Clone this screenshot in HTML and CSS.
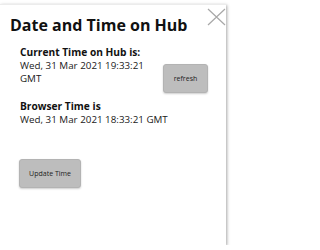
FILE: index.html
```html
<!DOCTYPE html>
<html>
<head>
<meta charset="utf-8">
<link rel="stylesheet" href="styles.css">
</head>
<body>
<div class="card">
  <div class="close" aria-label="close">
    <svg width="19" height="18" viewBox="0 0 19 18"><path d="M1 1L18 17M18 1L1 17" stroke="#a8a8a8" stroke-width="1.2" fill="none"/></svg>
  </div>
  <h1 class="title">Date and Time on Hub</h1>
  <div class="section">
    <div class="row">
      <div class="info">
        <div class="label">Current Time on Hub is:</div>
        <div class="value">Wed, 31 Mar 2021 19:33:21 GMT</div>
      </div>
      <button class="btn btn-refresh">refresh</button>
    </div>
    <div class="info browser">
      <div class="label">Browser Time is</div>
      <div class="value">Wed, 31 Mar 2021 18:33:21 GMT</div>
    </div>
    <button class="btn btn-update">Update Time</button>
  </div>
</div>
</body>
</html>
```
FILE: styles.css
```css
html, body {
  margin: 0;
  padding: 0;
  background: #ffffff;
}
body {
  font-family: "Open Sans", Lato, sans-serif;
  color: #111;
}
.card {
  position: relative;
  box-sizing: border-box;
  width: 226px;
  height: 241px;
  margin-top: 4px;
  background: #fff;
  border-top: 1px solid #ececec;
  box-shadow: 1px 1px 3px rgba(0,0,0,0.35);
  padding: 11px 0 0 10px;
}
.close {
  position: absolute;
  top: 3px;
  right: 0;
  width: 19px;
  height: 18px;
}
.close svg { display: block; }
.title {
  margin: 0;
  font-size: 16px;
  font-weight: 700;
  line-height: 19px;
  color: #111;
}
.section {
  padding-left: 10px;
  margin-top: 10.5px;
}
.row {
  display: flex;
  align-items: flex-start;
}
.info {
  width: 130px;
}
.label {
  font-size: 10.2px;
  font-weight: 700;
  line-height: 13px;
}
.value {
  font-size: 9.8px;
  line-height: 13.5px;
  color: #1a1a1a;
}
.browser {
  width: auto;
  margin-top: 7px;
}
.btn {
  font-family: "Open Sans", Lato, sans-serif;
  background: #bdbdbd;
  border: 1px solid #b3b3b3;
  border-radius: 3px;
  box-shadow: 0 1px 2px rgba(0,0,0,0.2);
  color: #222;
  font-size: 7px;
  padding: 0;
  height: 29px;
}
.btn-refresh {
  width: 45px;
  margin-top: 18px;
  margin-left: 13px;
}
.btn-update {
  width: 62px;
  margin-top: 33px;
  margin-left: -1px;
  display: block;
}
```
